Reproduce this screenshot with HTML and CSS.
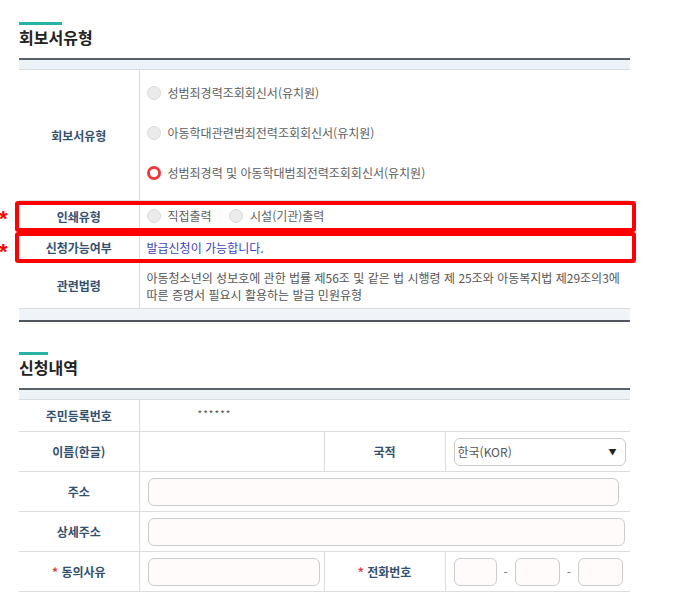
FILE: index.html
```html
<!DOCTYPE html>
<html lang="ko">

<head>
    <meta charset="UTF-8">
    <meta name="viewport" content="width=device-width, initial-scale=1.0">
    <title>회보서 발급 신청</title>
    <link rel="stylesheet" href="styles.css">
</head>

<body>
    <div class="page">

        <!-- 회보서유형 -->
        <section class="sec sec-type">
            <h3 class="sec-title"><span class="bar"></span>회보서유형</h3>

            <div class="tbl-wrap">
                <table class="tbl">
                    <colgroup>
                        <col class="c-label">
                        <col>
                    </colgroup>
                    <thead>
                        <tr><th colspan="2"></th></tr>
                    </thead>
                    <tbody>
                        <tr class="r-type">
                            <th>회보서유형</th>
                            <td class="radio-list">
                                <label class="rd"><span class="dot"></span>성범죄경력조회회신서(유치원)</label>
                                <label class="rd"><span class="dot"></span>아동학대관련범죄전력조회회신서(유치원)</label>
                                <label class="rd"><span class="dot on"></span>성범죄경력 및 아동학대범죄전력조회회신서(유치원)</label>
                            </td>
                        </tr>
                        <tr class="r-small">
                            <th>인쇄유형</th>
                            <td class="radio-row">
                                <label class="rd"><span class="dot"></span>직접출력</label>
                                <label class="rd"><span class="dot"></span>시설(기관)출력</label>
                            </td>
                        </tr>
                        <tr class="r-small">
                            <th>신청가능여부</th>
                            <td class="ok-msg">발급신청이 가능합니다.</td>
                        </tr>
                        <tr class="r-law">
                            <th>관련법령</th>
                            <td class="law">아동청소년의 성보호에 관한 법률 제56조 및 같은 법 시행령 제 25조와 아동복지법 제29조의3에<br>따른 증명서 필요시 활용하는 발급 민원유형</td>
                        </tr>
                    </tbody>
                    <tfoot>
                        <tr><td colspan="2"></td></tr>
                    </tfoot>
                </table>

                <!-- 표시 (빨간 박스) -->
                <div class="mark mark-print"></div>
                <div class="mark mark-avail"></div>
                <span class="star star-print">*</span>
                <span class="star star-avail">*</span>
            </div>
        </section>

        <!-- 신청내역 -->
        <section class="sec sec-apply">
            <h3 class="sec-title"><span class="bar bar-short"></span>신청내역</h3>

            <table class="tbl">
                <colgroup>
                    <col class="c-label">
                    <col class="c-val">
                    <col class="c-label2">
                    <col>
                </colgroup>
                <thead>
                    <tr><th colspan="4"></th></tr>
                </thead>
                <tbody>
                    <tr class="r-id">
                        <th>주민등록번호</th>
                        <td colspan="3" class="masked">******</td>
                    </tr>
                    <tr class="r-form">
                        <th>이름(한글)</th>
                        <td></td>
                        <th>국적</th>
                        <td>
                            <span class="sel">
                                <select>
                                    <option>한국(KOR)</option>
                                </select>
                            </span>
                        </td>
                    </tr>
                    <tr class="r-form">
                        <th>주소</th>
                        <td colspan="3"><input type="text" class="inp inp-addr"></td>
                    </tr>
                    <tr class="r-form">
                        <th>상세주소</th>
                        <td colspan="3"><input type="text" class="inp inp-detail"></td>
                    </tr>
                    <tr class="r-form">
                        <th><span class="req">*</span> 동의사유</th>
                        <td><input type="text" class="inp inp-reason"></td>
                        <th><span class="req">*</span> 전화번호</th>
                        <td>
                            <div class="phone">
                                <input type="text" class="inp inp-tel1">
                                <span class="dash">-</span>
                                <input type="text" class="inp inp-tel">
                                <span class="dash">-</span>
                                <input type="text" class="inp inp-tel">
                            </div>
                        </td>
                    </tr>
                </tbody>
            </table>
        </section>

    </div>
</body>

</html>
```

FILE: styles.css
```css
body {
    margin: 0;
    background-color: #ffffff;
    font-family: "Noto Sans CJK KR", "Noto Sans", sans-serif;
    color: #333333;
}

.page {
    width: 611px;
    margin-left: 19px;
    padding-top: 22px;
}

.sec-title {
    margin: 0 0 12px 0;
    font-size: 16px;
    line-height: 18px;
    font-weight: 700;
    color: #222222;
}

.sec-title .bar {
    display: block;
    width: 43px;
    height: 3px;
    margin-bottom: 3px;
    background-color: #27b3a5;
}

.sec-title .bar-short {
    width: 29px;
}

.sec-apply {
    margin-top: 30px;
}

.tbl-wrap {
    position: relative;
}

/* 표 */
.tbl {
    width: 611px;
    border-collapse: collapse;
    table-layout: fixed;
    font-size: 12px;
}

.c-label {
    width: 120px;
}

.c-label2 {
    width: 121px;
}

.c-val {
    width: 185px;
}

.tbl thead th {
    height: 9px;
    padding: 0;
    border-top: 2px solid #59616a;
    border-bottom: 1px solid #d5dce4;
    background-color: #edf2f7;
}

.tbl tfoot td {
    height: 11px;
    padding: 0;
    border-top: 1px solid #dcdcdc;
    border-bottom: 2px solid #4f565e;
    background-color: #f0f4f8;
}

.tbl tbody th {
    padding: 0;
    font-weight: 700;
    color: #34506f;
    text-align: center;
    vertical-align: middle;
    border-bottom: 1px solid #dddddd;
    border-right: 1px solid #dddddd;
}

.tbl tbody td {
    padding: 0 8px;
    color: #555555;
    vertical-align: middle;
    border-bottom: 1px solid #dddddd;
    border-right: 1px solid #dddddd;
}

.tbl tbody td:last-child {
    border-right: none;
}

.tbl tbody tr:last-child th,
.tbl tbody tr:last-child td {
    border-bottom: none;
}

.sec-apply .tbl tbody tr:last-child th,
.sec-apply .tbl tbody tr:last-child td {
    border-bottom: 1px solid #dddddd;
}

.r-type {
    height: 130px;
}

.r-small {
    height: 31px;
}

.r-law {
    height: 46px;
}

.r-id {
    height: 32px;
}

.r-form {
    height: 40px;
}

/* 라디오 */
.tbl tbody td.radio-list {
    padding: 13px 7px 17px 7px;
}

.radio-list .rd {
    display: flex;
    height: 20px;
    margin-bottom: 20px;
}

.radio-list .rd:last-child {
    margin-bottom: 0;
}

.rd {
    display: inline-flex;
    align-items: center;
    gap: 7px;
    color: #5e5e5e;
    line-height: 20px;
}

.radio-row .rd {
    margin-right: 14px;
}

.tbl tbody td.radio-row,
.tbl tbody td.ok-msg {
    padding: 0 7px;
}

.tbl tbody td.law {
    padding: 1px 2px 0 7px;
    white-space: nowrap;
    line-height: 17px;
}

.dot {
    display: inline-block;
    width: 14px;
    height: 14px;
    border: 1px solid #dadada;
    border-radius: 50%;
    background-color: #ebebeb;
    box-sizing: border-box;
}

.dot.on {
    border: 3px solid #ea3a3e;
    background-color: #ffffff;
}

.tbl tbody td.ok-msg {
    color: #3d41bd;
}

.tbl tbody td.masked {
    padding-left: 58px;
    padding-bottom: 4px;
    letter-spacing: 1px;
    font-size: 10px;
}

/* 빨간 박스 */
.mark {
    position: absolute;
    left: -4px;
    width: 621px;
    height: 31px;
    border: 4px solid #ff0000;
    border-radius: 3px;
    box-sizing: border-box;
}

.mark-print {
    top: 143px;
}

.mark-avail {
    top: 174px;
}

.star {
    position: absolute;
    left: -20px;
    color: #ff0000;
    font-family: "Liberation Sans", sans-serif;
    font-weight: 700;
    font-size: 22px;
    line-height: 22px;
}

.star-print {
    top: 150px;
}

.star-avail {
    top: 183px;
}

/* 입력 */
.inp {
    height: 28px;
    padding: 0 6px;
    border: 1px solid #cccccc;
    border-radius: 6px;
    background-color: #fffbfb;
    box-sizing: border-box;
    font-family: inherit;
    vertical-align: middle;
}

.inp-addr {
    width: 471px;
}

.inp-detail {
    width: 477px;
}

.inp-reason {
    width: 172px;
}

.sel {
    position: relative;
    display: inline-block;
}

.sel select {
    width: 172px;
    height: 28px;
    padding: 0 3px;
    border: 1px solid #cccccc;
    border-radius: 6px;
    background-color: #ffffff;
    color: #555555;
    font-family: inherit;
    font-size: 12px;
    appearance: none;
    -webkit-appearance: none;
    vertical-align: middle;
}

.sel::after {
    content: "▼";
    position: absolute;
    right: 9px;
    top: 8px;
    font-size: 8px;
    line-height: 12px;
    color: #222222;
}

.phone {
    display: flex;
    align-items: center;
    gap: 7px;
}

.inp-tel1 {
    width: 43px;
}

.inp-tel {
    width: 45px;
}

.dash {
    color: #777777;
    width: 5px;
    text-align: center;
}

.req {
    color: #e23b3b;
}
```
